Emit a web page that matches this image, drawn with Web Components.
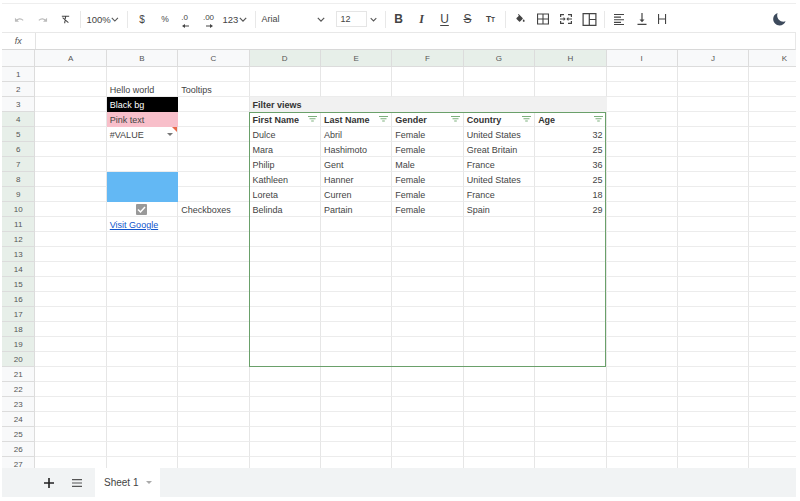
<!DOCTYPE html>
<html lang="en">
<head>
<meta charset="utf-8">
<title>Sheet</title>
<style>
  html, body { margin: 0; background: #fff; }
  body { font-family: "Liberation Sans", Arial, sans-serif; color: #333; }
</style>
</head>
<body>
<sheet-app>
  <sheet-toolbar slot="toolbar">
    <tool-button muted><svg viewBox="0 0 24 24"><path d="M5 15c3-5 10-6 15-1" fill="none" stroke="currentColor" stroke-width="2.500"/><path d="M2 8v9h9z"/></svg></tool-button>
    <tool-button muted><svg viewBox="0 0 24 24"><path d="M19 15c-3-5-10-6-15-1" fill="none" stroke="currentColor" stroke-width="2.500"/><path d="M22 8v9h-9z"/></svg></tool-button>
    <tool-button><svg viewBox="0 0 24 24"><path d="M4 4h16v2H4zM11 6h2.400l-.8 5h-2.400zM9.800 14h2.400L11.400 20H9zM5 8.500l1.400-1.400 12.600 11-1.400 1.400z"/></svg></tool-button>
    <tool-sep></tool-sep>
    <tool-select width="40">100%</tool-select>
    <tool-sep></tool-sep>
    <tool-button>$</tool-button>
    <tool-button small>%</tool-button>
    <tool-button style="margin-left:-2.500px"><span style="font-size:8px;position:relative;top:-2px;left:-1px">.0</span><svg style="position:absolute;left:8px;top:16px;width:7px;height:4px;fill:#444" viewBox="0 0 7 4"><path d="M7 1.500H3V0L0 2l3 2V2.500h4z"/></svg></tool-button>
    <tool-button style="margin-right:-.500px"><span style="font-size:8px;position:relative;top:-2px">.00</span><svg style="position:absolute;left:9px;top:16px;width:7px;height:4px;fill:#444" viewBox="0 0 7 4"><path d="M0 1.500h4V0l3 2-3 2V2.500H0z"/></svg></tool-button>
    <tool-select width="32">123</tool-select>
    <tool-sep></tool-sep>
    <tool-select width="71" font="9">Arial</tool-select>
    <size-box>12</size-box>
    <tool-select width="15"></tool-select>
    <tool-sep></tool-sep>
    <tool-button large style="font-weight:700;margin-left:-1.500px">B</tool-button>
    <tool-button large style="font-weight:700;font-style:italic;font-family:'Liberation Serif',serif">I</tool-button>
    <tool-button large style="text-decoration:underline;text-underline-offset:2px">U</tool-button>
    <tool-button large style="text-decoration:line-through">S</tool-button>
    <tool-button small style="font-weight:700">T<span style="font-size:6.500px">T</span></tool-button>
    <tool-sep></tool-sep>
    <tool-button style="margin-left:-.500px"><svg viewBox="0 0 24 24"><path d="M16.600 8.900 8 0 6.400 1.400l2.200 2.400-5.200 5.100c-.6.600-.6 1.500 0 2.100l5.500 5.500c.3.300.7.500 1.100.5s.8-.2 1.100-.5l5.500-5.500c.6-.6.600-1.600 0-2.100zM19 11.500s-2 2.200-2 3.500a2 2 0 0 0 4 0c0-1.300-2-3.500-2-3.500z"/></svg></tool-button>
    <tool-button big><svg viewBox="0 0 14 14"><path d="M1 1.500h12v11H1zM2.100 2.600v3.850h4.350V2.600zm5.450 0v3.850h4.350V2.600zM2.100 7.550v3.850h4.350V7.550zm5.450 0v3.850h4.350V7.550z" fill-rule="evenodd"/></svg></tool-button>
    <tool-button big><svg viewBox="0 0 14 14"><path d="M1 2h4v1.200H2.200V5H1zM9 2h4v3h-1.200V3.200H9zM1 9h1.200v1.800H5V12H1zM11.800 9H13v3H9v-1.200h2.800zM1 6.400h3.600V5l2 2-2 2V7.600H1zM13 6.400H9.400V5l-2 2 2 2V7.600H13z"/></svg></tool-button>
    <tool-button big style="--icon:15px"><svg viewBox="0 0 15 15"><path d="M.5 1h14v13H.5zM1.700 2.200v10.600h5V2.200zm6.200 0v4.700h5.400V2.200zm0 5.900v4.700h5.400V8.100z" fill-rule="evenodd"/></svg></tool-button>
    <tool-sep></tool-sep>
    <tool-button big style="--icon:12px"><svg viewBox="0 0 12 12"><path d="M1 1h10v1.100H1zM1 3.600h7v1.100H1zM1 6.200h10v1.100H1zM1 8.800h7v1.100H1zM1 11h10v1H1z"/></svg></tool-button>
    <tool-button big style="--icon:12px"><svg viewBox="0 0 12 12"><path d="M1.500 10.800h9V12h-9zM5.400 0h1.200v6.500h1.900L6 9.300 3.500 6.500h1.900z"/></svg></tool-button>
    <tool-button big style="--icon:12px;margin-left:-3px"><svg viewBox="0 0 12 12"><path d="M2 1h1.100v10H2zM9 1h1.100v10H9zM3 5.500h6v1.100H3z"/></svg></tool-button>
    <theme-button></theme-button>
  </sheet-toolbar>
  <formula-bar slot="formula"></formula-bar>
  <sheet-grid slot="grid"></sheet-grid>
  <sheet-tabs slot="tabs"><sheet-tab>Sheet 1</sheet-tab></sheet-tabs>
</sheet-app>

<script>
const define = (name, css, html, setup) => {
  customElements.define(name, class extends HTMLElement {
    constructor() {
      super();
      this.attachShadow({ mode: 'open' });
    }
    connectedCallback() {
      this.shadowRoot.innerHTML = `<style>${css}</style>${typeof html === 'function' ? html(this) : html}`;
      if (setup) setup(this);
    }
  });
};

const chevron = '<svg viewBox="0 0 10 6" width="8" height="5"><path d="M1 1l4 4 4-4" fill="none" stroke="#555" stroke-width="1.500"/></svg>';

define('sheet-app', `
  :host { display: flex; flex-direction: column; width: 794px; height: 497px; margin-left: 2px; overflow: hidden; }
`, '<slot name="toolbar"></slot><slot name="formula"></slot><slot name="grid"></slot><slot name="tabs"></slot>');

define('sheet-toolbar', `
  :host { display: flex; align-items: center; box-sizing: border-box; flex: none; height: 30px; margin-top: 3px; padding: 2px 0 0 5.500px;
    border-top: 1px solid #eeeeee; border-bottom: 1px solid #e8e8e8; color: #555; }
`, '<slot></slot>');

define('tool-button', `
  :host { display: flex; align-items: center; justify-content: center; position: relative; flex: none; width: 23px; height: 22px;
    font-size: 10px; color: #444; }
  :host([small]) { font-size: 8.500px; }
  :host([large]) { font-size: 12px; }
  :host([muted]) { color: #bbb; }
  ::slotted(svg:not([style])) { width: var(--icon, 11px); height: var(--icon, 11px); fill: currentColor; }
  :host([big]) ::slotted(svg:not([style])) { width: var(--icon, 14px); height: var(--icon, 14px); }
  :host([muted]) ::slotted(svg) { width: 11px; height: 11px; }
`, '<slot></slot>');

define('tool-sep', `
  :host { display: block; flex: none; width: 1px; height: 17px; background: #e8e8e8; margin: 0 3px; }
`, '');

define('tool-select', `
  :host { display: flex; align-items: center; justify-content: space-between; flex: none; box-sizing: border-box; height: 22px; padding: 0 5px 0 3px; font-size: 9.500px; color: #444; }
`, el => {
  el.style.width = el.getAttribute('width') + 'px';
  if (el.getAttribute('font')) el.style.fontSize = el.getAttribute('font') + 'px';
  return `<span><slot></slot></span>${chevron}`;
});

define('size-box', `
  :host { display: flex; align-items: center; flex: none; box-sizing: border-box; width: 31px; height: 16px; margin-left: 6px; padding-left: 4px;
    border: 1px solid #e5e5e5; font-size: 9px; color: #444; }
`, '<slot></slot>');

define('theme-button', `
  :host { display: block; margin-left: auto; margin-right: 10px; width: 14px; height: 14px; }
  svg { display: block; width: 14px; height: 14px; }
`, '<svg viewBox="0 0 24 24"><path fill="#3d4a5c" d="M9.500 1.500C5 3 2 7.200 2 12c0 6 4.900 11 11 11 4.700 0 8.800-3 10.300-7.200-1.200.5-2.400.7-3.800.7-6 0-10.600-4.800-10.600-10.500 0-1.600.2-3.100.6-4.500z"/></svg>');

define('formula-bar', `
  :host { display: flex; height: 17px; box-sizing: border-box; border-bottom: 1px solid #d8d8d8; border-right: 1px solid #e8e8e8; flex: none; }
  .fx { box-sizing: border-box; width: 33.500px; border-right: 1px solid #e3e3e3; display: flex; align-items: center; justify-content: center;
    font: italic 9px "Liberation Sans", sans-serif; color: #555; }
`, '<div class="fx">fx</div>');

define('sheet-cell', `
  :host { display: flex; align-items: center; box-sizing: border-box; min-width: 0; position: relative; padding: 1px 3px 0;
    border-right: 1px solid #e6e6e6; border-bottom: 1px solid #ececec; font-size: 9px; white-space: nowrap; overflow: hidden; color: #444; }
  :host([right]) { justify-content: flex-end; }
  :host([center]) { justify-content: center; padding-top: 0; }
  :host([bold]) { font-weight: 700; color: #333; }
  :host([head]) { justify-content: center; background: #f8f9fa; font-size: 8px; color: #555; border-bottom-color: #dcdcdc; border-right-color: #dcdcdc; padding: 0; }
  :host([active]) { background: #e7efe9; }
  :host([black]) { background: #000; color: #fff; border-color: #000; }
  :host([pink]) { background: #f8bfca; border-color: #f8bfca; }
  :host([blue]) { background: #63b8f4; border-color: #63b8f4; }
  :host([view]) { background: #f1f1f1; border-bottom-color: #f1f1f1; border-right-color: #f1f1f1; }
  a { color: #1155cc; text-decoration: underline; }
  svg { position: absolute; right: 3px; top: 4px; }
  .arrow { position: absolute; right: 4px; top: 6px; width: 0; height: 0; border: 3px solid transparent; border-top: 3.500px solid #777; border-bottom: 0; }
  .error { position: absolute; right: 0; top: 0; width: 0; height: 0; border-left: 5px solid transparent; border-top: 5px solid #e8694a; }
  .box { width: 11px; height: 11px; background: #999; border-radius: 1px; display: block; position: static; }
`, el => {
  const extras = {
    filter: '<svg width="9" height="6" viewBox="0 0 9 6"><path fill="#7cb07c" d="M0 0h9v1H0zM1.500 2.300h6v1h-6zM3.200 4.600h2.600v1H3.200z"/></svg>',
    error: '<span class="arrow"></span><span class="error"></span>',
    check: '<svg class="box" viewBox="0 0 11 11"><path d="M2 5.500l2.500 2.500L9 3" fill="none" stroke="#fff" stroke-width="1.500"/></svg>'
  };
  const kind = el.getAttribute('extra');
  const body = el.hasAttribute('link') ? '<a href="#"><slot></slot></a>' : '<slot></slot>';
  return body + (kind ? extras[kind] : '');
});

const sheetData = {
  B2: 'Hello world', C2: 'Tooltips',
  B3: 'Black bg', B4: 'Pink text', B5: '#VALUE', C10: 'Checkboxes', B11: 'Visit Google',
  D3: 'Filter views'
};
const filterRows = [
  ['First Name', 'Last Name', 'Gender', 'Country', 'Age'],
  ['Dulce', 'Abril', 'Female', 'United States', '32'],
  ['Mara', 'Hashimoto', 'Female', 'Great Britain', '25'],
  ['Philip', 'Gent', 'Male', 'France', '36'],
  ['Kathleen', 'Hanner', 'Female', 'United States', '25'],
  ['Loreta', 'Curren', 'Female', 'France', '18'],
  ['Belinda', 'Partain', 'Female', 'Spain', '29']
];
const columns = 'ABCDEFGHIJK'.split('');
filterRows.forEach((row, r) => {
  row.forEach((value, c) => { sheetData['DEFGH'[c] + (r + 4)] = value; });
});

const cellAttrs = (ref, col, row) => {
  const attrs = [];
  if (ref === 'B3') attrs.push('black');
  if (ref === 'B4') attrs.push('pink');
  if (ref === 'B8' || ref === 'B9') attrs.push('blue');
  if (ref === 'B5') attrs.push('extra="error"');
  if (ref === 'B10') attrs.push('extra="check"', 'center');
  if (ref === 'B11') attrs.push('link');
  if (row === 3 && 'DEFGH'.includes(col)) attrs.push('view');
  if (ref === 'D3') attrs.push('bold');
  if (row === 4 && 'DEFGH'.includes(col)) attrs.push('bold', 'extra="filter"');
  if (col === 'H' && row > 4 && row < 11) attrs.push('right');
  return attrs.join(' ');
};

define('sheet-grid', `
  :host { display: block; position: relative; flex: none; height: 418px; overflow: hidden; }
  .grid { display: grid; grid-template-columns: 33.400px repeat(11, 71.400px); grid-auto-rows: 15px; grid-template-rows: 17px; }
  .frame { position: absolute; left: 247.300px; top: 62px; width: 357px; height: 255px; box-sizing: border-box; border: 1px solid #6aa06a; pointer-events: none; }
`, () => {
  let cells = '<sheet-cell head></sheet-cell>';
  columns.forEach(col => {
    cells += `<sheet-cell head ${'DEFGH'.includes(col) ? 'active' : ''}>${col}</sheet-cell>`;
  });
  for (let row = 1; row <= 27; row++) {
    cells += `<sheet-cell head ${row >= 4 && row <= 20 ? 'active' : ''}>${row}</sheet-cell>`;
    columns.forEach(col => {
      const ref = col + row;
      cells += `<sheet-cell ${cellAttrs(ref, col, row)}>${sheetData[ref] || ''}</sheet-cell>`;
    });
  }
  return `<div class="grid">${cells}</div><div class="frame"></div>`;
});

define('sheet-tabs', `
  :host { display: flex; align-items: stretch; flex: none; height: 29px; background: #f1f3f4; padding-left: 33px; }
  .btn { display: flex; align-items: center; justify-content: center; width: 28px; }
  svg { fill: #222; }
`, `<div class="btn"><svg width="12" height="12" viewBox="0 0 12 12"><path d="M5.200 1h1.600v4.200H11v1.600H6.800V11H5.200V6.800H1V5.200h4.200z"/></svg></div>
   <div class="btn"><svg width="10" height="8" viewBox="0 0 10 8" style="fill:#555"><path d="M0 0h10v1.200H0zM0 3.400h10v1.200H0zM0 6.800h10V8H0z"/></svg></div>
   <slot></slot>`);

define('sheet-tab', `
  :host { display: flex; align-items: center; margin-left: 4px; box-sizing: border-box; width: 65px; padding-left: 9px; background: #fff; font-size: 10px; color: #444; }
  i { margin-left: 8px; width: 0; height: 0; border: 3px solid transparent; border-top: 3px solid #aaa; border-bottom: 0; }
`, '<slot></slot><i></i>');
</script>
</body>
</html>
